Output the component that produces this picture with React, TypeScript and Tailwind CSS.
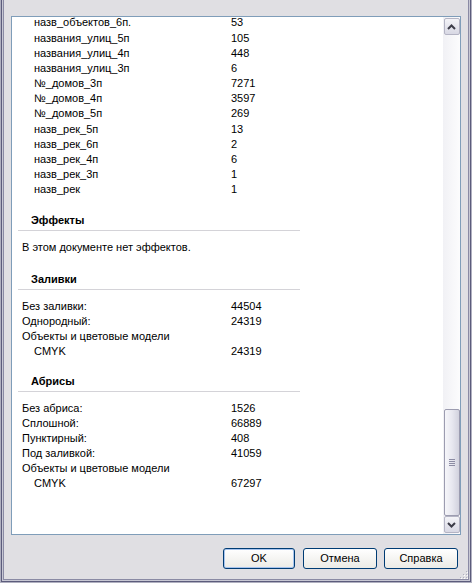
import React from "react";

const topRows: [string, string][] = [
  ["назв_объектов_6п.", "53"],
  ["названия_улиц_5п", "105"],
  ["названия_улиц_4п", "448"],
  ["названия_улиц_3п", "6"],
  ["№_домов_3п", "7271"],
  ["№_домов_4п", "3597"],
  ["№_домов_5п", "269"],
  ["назв_рек_5п", "13"],
  ["назв_рек_6п", "2"],
  ["назв_рек_4п", "6"],
  ["назв_рек_3п", "1"],
  ["назв_рек", "1"],
];

function Row({ name, value, indent = false, tall = false }: { name: string; value?: string; indent?: boolean; tall?: boolean }) {
  return (
    <div className={tall ? "flex h-[15.2px] items-center" : "flex h-[15px] items-center"}>
      <div className={indent ? "w-[219px] shrink-0 pl-[22px] whitespace-nowrap" : "w-[219px] shrink-0 pl-[10px] whitespace-nowrap"}>
        {name}
      </div>
      <div>{value}</div>
    </div>
  );
}

function Header({ title }: { title: string }) {
  return (
    <div className="ml-[6px] w-[282px] border-b border-[#d4d3d8] pb-[2px] pl-[13px] font-bold leading-[15px]">
      {title}
    </div>
  );
}

function ScrollArrow({ up }: { up: boolean }) {
  return (
    <div className="mx-auto flex h-[17px] w-[16px] items-center justify-center rounded-[2px] border border-[#b4b4c4] bg-gradient-to-b from-[#f4f4f8] to-[#d8d8e4]">
      <svg width="9" height="6" viewBox="0 0 9 6">
        {up ? (
          <path d="M1 5 L4.5 1.5 L8 5" stroke="#3c3c48" strokeWidth="2" fill="none" />
        ) : (
          <path d="M1 1 L4.5 4.5 L8 1" stroke="#3c3c48" strokeWidth="2" fill="none" />
        )}
      </svg>
    </div>
  );
}

export default function App() {
  return (
    <div
      className="relative h-[583px] w-[472px] overflow-hidden bg-[#e0dfe3] text-[11px] text-black"
      style={{ fontFamily: '"Liberation Sans", Arial, sans-serif' }}
    >
      <div className="flex h-full w-full flex-col border-b border-l border-r border-[#b0b0c0]">
        <div className="flex flex-1 flex-col border-b border-l border-r border-[#5c5c7c]">
          <div className="flex flex-1 flex-col border-b border-l border-r border-[#c8c8d4]">
            <div className="flex flex-1 flex-col border-b border-l border-r border-[#8a8aa4]">
              <div className="flex flex-1 flex-col pl-[7px] pr-[4px] pt-[16px]">
                {/* list box */}
                <div className="flex h-[519px] w-[450px] border border-[#7f9db9] bg-white">
                  <div className="flex-1 overflow-hidden">
                    <div className="-mt-[2px]">
                      {topRows.map(([n, v]) => (
                        <Row key={n} name={n} value={v} indent tall />
                      ))}
                      <div className="h-[16px]" />
                      <Header title="Эффекты" />
                      <div className="mt-[9px] h-[15px] pl-[10px] leading-[15px]">В этом документе нет эффектов.</div>
                      <div className="h-[17px]" />
                      <Header title="Заливки" />
                      <div className="mt-[8px]">
                        <Row name="Без заливки:" value="44504" />
                        <Row name="Однородный:" value="24319" />
                        <Row name="Объекты и цветовые модели" />
                        <Row name="CMYK" value="24319" indent />
                      </div>
                      <div className="h-[16px]" />
                      <Header title="Абрисы" />
                      <div className="mt-[8px]">
                        <Row name="Без абриса:" value="1526" />
                        <Row name="Сплошной:" value="66889" />
                        <Row name="Пунктирный:" value="408" />
                        <Row name="Под заливкой:" value="41059" />
                        <Row name="Объекты и цветовые модели" />
                        <Row name="CMYK" value="67297" indent />
                      </div>
                    </div>
                  </div>
                  <div className="flex w-[17px] flex-col bg-gradient-to-r from-[#f1f1f5] to-[#fcfcfd] pt-[1px] pb-[1px]">
                    <ScrollArrow up />
                    <div className="flex-1" />
                    <div className="mx-auto flex h-[107px] w-[16px] items-center justify-center rounded-[2px] border border-[#9c9cb0] bg-gradient-to-r from-[#f6f6fa] via-[#e8e8f0] to-[#d2d2de]">
                      <div className="flex w-[6px] flex-col gap-[1px]">
                        <div className="h-[1px] bg-[#8c8ca4]" />
                        <div className="h-[1px] bg-[#8c8ca4]" />
                        <div className="h-[1px] bg-[#8c8ca4]" />
                        <div className="h-[1px] bg-[#8c8ca4]" />
                      </div>
                    </div>
                    <ScrollArrow up={false} />
                  </div>
                </div>
                <div className="mt-[13px] flex justify-end pr-[6px]">
                  <button className="h-[21px] w-[72px] rounded-[3px] border border-[#003c74] bg-gradient-to-b from-white to-[#ecebe6] shadow-[inset_0_0_0_1px_#a8c4ee]">
                    OK
                  </button>
                  <button className="ml-[8px] h-[21px] w-[74px] rounded-[3px] border border-[#003c74] bg-gradient-to-b from-white to-[#ecebe6]">
                    Отмена
                  </button>
                  <button className="ml-[7px] h-[21px] w-[74px] rounded-[3px] border border-[#003c74] bg-gradient-to-b from-white to-[#ecebe6]">
                    Справка
                  </button>
                </div>
              </div>
            </div>
          </div>
        </div>
      </div>
      {/* resize grip */}
      <svg className="absolute bottom-[4px] right-[4px]" width="9" height="9" viewBox="0 0 9 9">
        <rect x="7" y="1" width="1" height="1" fill="#b0b0c0" />
        <rect x="4" y="4" width="1" height="1" fill="#b0b0c0" />
        <rect x="7" y="4" width="1" height="1" fill="#b0b0c0" />
        <rect x="1" y="7" width="1" height="1" fill="#b0b0c0" />
        <rect x="4" y="7" width="1" height="1" fill="#b0b0c0" />
        <rect x="7" y="7" width="1" height="1" fill="#b0b0c0" />
        <rect x="8" y="2" width="1" height="1" fill="#ffffff" />
        <rect x="5" y="5" width="1" height="1" fill="#ffffff" />
        <rect x="8" y="5" width="1" height="1" fill="#ffffff" />
        <rect x="2" y="8" width="1" height="1" fill="#ffffff" />
        <rect x="5" y="8" width="1" height="1" fill="#ffffff" />
        <rect x="8" y="8" width="1" height="1" fill="#ffffff" />
      </svg>
    </div>
  );
}
